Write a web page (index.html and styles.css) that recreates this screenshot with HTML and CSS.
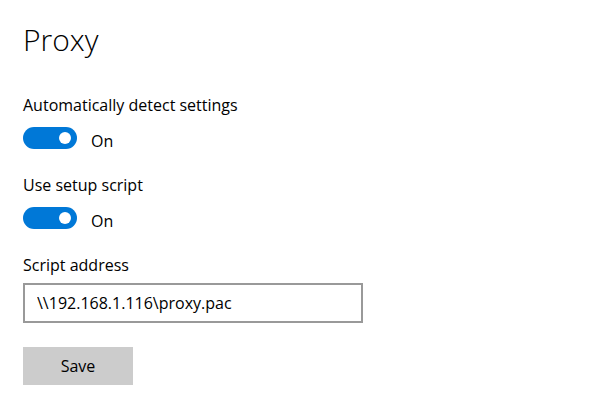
FILE: index.html
```html
<!DOCTYPE html>
<html lang="en">
<head>
    <meta charset="UTF-8">
    <title>Proxy</title>
    <link rel="stylesheet" href="styles.css">
</head>
<body>
    <div class="page">
        <h1>Proxy</h1>

        <div class="setting">
            <div class="setting-label">Automatically detect settings</div>
            <div class="toggle-row">
                <span class="toggle on"><span class="knob"></span></span>
                <span class="toggle-text">On</span>
            </div>
        </div>

        <div class="setting">
            <div class="setting-label">Use setup script</div>
            <div class="toggle-row">
                <span class="toggle on"><span class="knob"></span></span>
                <span class="toggle-text">On</span>
            </div>
        </div>

        <div class="setting">
            <div class="setting-label field-label">Script address</div>
            <input type="text" class="address" value="\\192.168.1.116\proxy.pac">
        </div>

        <button class="save-btn">Save</button>
    </div>
</body>
</html>
```

FILE: styles.css
```css
body {
    background-color: #ffffff;
    font-family: 'Open Sans', 'Noto Sans', sans-serif;
    color: #000000;
    margin: 0;
}
.page {
    padding: 20px 0 0 23px;
}
h1 {
    font-size: 30px;
    font-weight: 300;
    line-height: 40px;
    margin: 0 0 33px 0;
}
.setting {
    margin-bottom: 24px;
}
.setting-label {
    font-size: 16px;
    line-height: 24px;
    margin-bottom: 10px;
}
.setting-label.field-label {
    margin-bottom: 6px;
}
.toggle-row {
    display: flex;
    align-items: center;
    height: 22px;
}
.toggle {
    width: 54px;
    height: 22px;
    border-radius: 11px;
    background-color: #0078d7;
    display: flex;
    align-items: center;
    justify-content: flex-end;
    padding-right: 6px;
    box-sizing: border-box;
}
.toggle .knob {
    width: 12px;
    height: 12px;
    border-radius: 50%;
    background-color: #ffffff;
}
.toggle-text {
    font-size: 16px;
    margin: 6px 0 0 14px;
}
.address {
    display: block;
    width: 340px;
    height: 40px;
    box-sizing: border-box;
    border: 2px solid #999999;
    padding: 0 12px;
    font-family: 'Open Sans', 'Noto Sans', sans-serif;
    font-size: 16px;
    color: #000000;
    outline: none;
}
.save-btn {
    display: block;
    width: 110px;
    height: 38px;
    border: none;
    background-color: #cccccc;
    font-family: 'Open Sans', 'Noto Sans', sans-serif;
    font-size: 16px;
    color: #000000;
}
```
